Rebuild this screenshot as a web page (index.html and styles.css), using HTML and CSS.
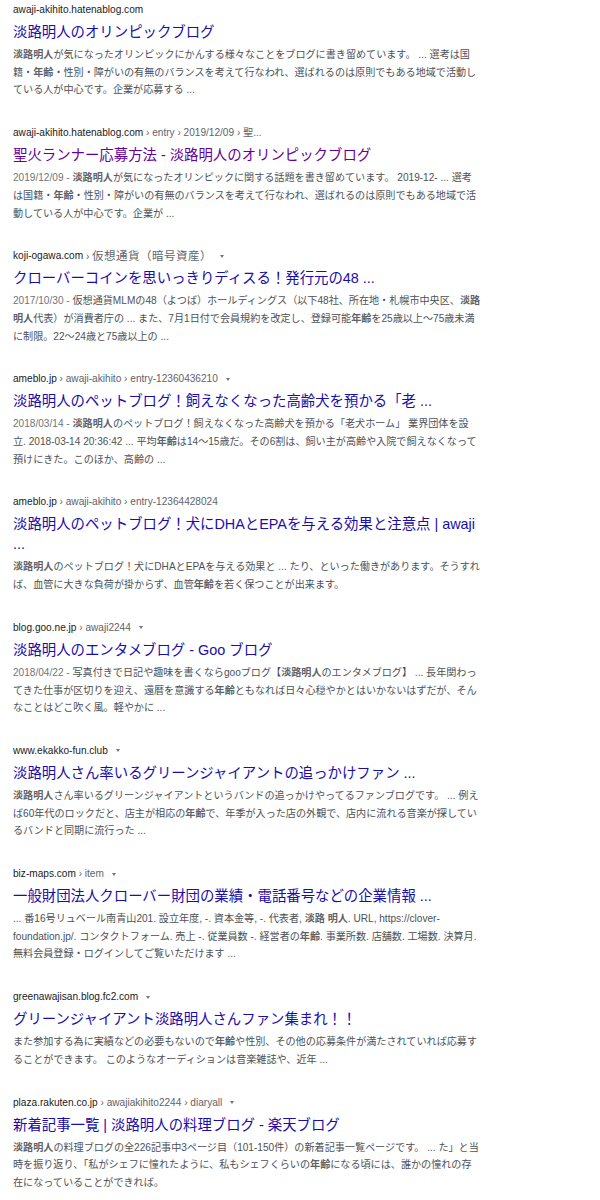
FILE: index.html
```html
<!DOCTYPE html>
<html lang="ja">
<head>
<meta charset="utf-8">
<title>淡路明人 - 検索結果</title>
<link rel="stylesheet" href="styles.css">
</head>
<body>
<div class="results">

<div class="result">
  <div class="url"><span class="dom">awaji-akihito.hatenablog.com</span></div>
  <h3 class="title"><a href="#">淡路明人のオリンピックブログ</a></h3>
  <div class="snippet"><b>淡路明人</b>が気になったオリンピックにかんする様々なことをブログに書き留めています。 ... 選考は国<br>籍・<b>年齢</b>・性別・障がいの有無のバランスを考えて行なわれ、選ばれるのは原則でもある地域で活動し<br>ている人が中心です。企業が応募する ...</div>
</div>

<div class="result">
  <div class="url"><span class="dom">awaji-akihito.hatenablog.com</span><span class="crumb"> › entry › 2019/12/09 › 聖...</span></div>
  <h3 class="title"><a href="#" class="visited">聖火ランナー応募方法 - 淡路明人のオリンピックブログ</a></h3>
  <div class="snippet"><span class="date">2019/12/09 - </span><b>淡路明人</b>が気になったオリンピックに関する話題を書き留めています。 2019-12- ... 選考<br>は国籍・<b>年齢</b>・性別・障がいの有無のバランスを考えて行なわれ、選ばれるのは原則でもある地域で活<br>動している人が中心です。企業が ...</div>
</div>

<div class="result">
  <div class="url"><span class="dom">koji-ogawa.com</span><span class="crumb"> › <span class="crumb-cjk">仮想通貨（暗号資産）</span></span><span class="arrow"></span></div>
  <h3 class="title"><a href="#">クローバーコインを思いっきりディスる！発行元の48 ...</a></h3>
  <div class="snippet"><span class="date">2017/10/30 - </span>仮想通貨MLMの48（よつば）ホールディングス（以下48社、所在地・札幌市中央区、<b>淡路<br>明人</b>代表）が消費者庁の ... また、7月1日付で会員規約を改定し、登録可能<b>年齢</b>を25歳以上～75歳未満<br>に制限。22～24歳と75歳以上の ...</div>
</div>

<div class="result">
  <div class="url"><span class="dom">ameblo.jp</span><span class="crumb"> › awaji-akihito › entry-12360436210</span><span class="arrow"></span></div>
  <h3 class="title"><a href="#">淡路明人のペットブログ！飼えなくなった高齢犬を預かる「老 ...</a></h3>
  <div class="snippet"><span class="date">2018/03/14 - </span><b>淡路明人</b>のペットブログ！飼えなくなった高齢犬を預かる「老犬ホーム」 業界団体を設<br>立. 2018-03-14 20:36:42 ... 平均<b>年齢</b>は14～15歳だ。その6割は、飼い主が高齢や入院で飼えなくなって<br>預けにきた。このほか、高齢の ...</div>
</div>

<div class="result">
  <div class="url"><span class="dom">ameblo.jp</span><span class="crumb"> › awaji-akihito › entry-12364428024</span></div>
  <h3 class="title"><a href="#">淡路明人のペットブログ！犬にDHAとEPAを与える効果と注意点 | awaji ...</a></h3>
  <div class="snippet"><b>淡路明人</b>のペットブログ！犬にDHAとEPAを与える効果と ... たり、といった働きがあります。そうすれ<br>ば、血管に大きな負荷が掛からず、血管<b>年齢</b>を若く保つことが出来ます。</div>
</div>

<div class="result">
  <div class="url"><span class="dom">blog.goo.ne.jp</span><span class="crumb"> › awaji2244</span><span class="arrow"></span></div>
  <h3 class="title"><a href="#">淡路明人のエンタメブログ - Goo ブログ</a></h3>
  <div class="snippet"><span class="date">2018/04/22 - </span>写真付きで日記や趣味を書くならgooブログ【<b>淡路明人</b>のエンタメブログ】 ... 長年関わっ<br>てきた仕事が区切りを迎え、還暦を意識する<b>年齢</b>ともなれば日々心穏やかとはいかないはずだが、そん<br>なことはどこ吹く風。軽やかに ...</div>
</div>

<div class="result">
  <div class="url"><span class="dom">www.ekakko-fun.club</span><span class="arrow"></span></div>
  <h3 class="title"><a href="#">淡路明人さん率いるグリーンジャイアントの追っかけファン ...</a></h3>
  <div class="snippet"><b>淡路明人</b>さん率いるグリーンジャイアントというバンドの追っかけやってるファンブログです。 ... 例え<br>ば60年代のロックだと、店主が相応の<b>年齢</b>で、年季が入った店の外観で、店内に流れる音楽が探してい<br>るバンドと同期に流行った ...</div>
</div>

<div class="result">
  <div class="url"><span class="dom">biz-maps.com</span><span class="crumb"> › item</span><span class="arrow"></span></div>
  <h3 class="title"><a href="#">一般財団法人クローバー財団の業績・電話番号などの企業情報 ...</a></h3>
  <div class="snippet">... 番16号リュベール南青山201. 設立年度, -. 資本金等, -. 代表者, <b>淡路 明人</b>. URL, https://clover-<br>foundation.jp/. コンタクトフォーム. 売上 -. 従業員数 -. 経営者の<b>年齢</b>. 事業所数. 店舗数. 工場数. 決算月.<br>無料会員登録・ログインしてご覧いただけます ...</div>
</div>

<div class="result">
  <div class="url"><span class="dom">greenawajisan.blog.fc2.com</span><span class="arrow"></span></div>
  <h3 class="title"><a href="#">グリーンジャイアント淡路明人さんファン集まれ！！</a></h3>
  <div class="snippet">また参加する為に実績などの必要もないので<b>年齢</b>や性別、その他の応募条件が満たされていれば応募す<br>ることができます。 このようなオーディションは音楽雑誌や、近年 ...</div>
</div>

<div class="result">
  <div class="url"><span class="dom">plaza.rakuten.co.jp</span><span class="crumb"> › awajiakihito2244 › diaryall</span><span class="arrow"></span></div>
  <h3 class="title"><a href="#">新着記事一覧 | 淡路明人の料理ブログ - 楽天ブログ</a></h3>
  <div class="snippet"><b>淡路明人</b>の料理ブログの全226記事中3ページ目（101-150件）の新着記事一覧ページです。 ... た」と当<br>時を振り返り、「私がシェフに憧れたように、私もシェフくらいの<b>年齢</b>になる頃には、誰かの憧れの存<br>在になっていることができれば。</div>
</div>

</div>
</body>
</html>
```

FILE: styles.css
```css
html, body {
  margin: 0;
  padding: 0;
  background: #ffffff;
}

body {
  font-family: "Liberation Sans", Arial, "Noto Sans CJK JP", sans-serif;
}

.results {
  display: flex;
  flex-direction: column;
  gap: 26px;
  padding: 2px 0 0 13px;
}

.result {
  width: 490px;
}

.url {
  font-size: 10.1px;
  line-height: 16px;
  height: 16px;
  white-space: nowrap;
  display: flex;
  align-items: center;
}

.dom {
  color: #202124;
}

.crumb {
  color: #5f6368;
  white-space: pre;
}

.crumb-cjk {
  font-size: 11.5px;
  letter-spacing: 0.5px;
}

.arrow {
  display: inline-block;
  width: 0;
  height: 0;
  margin-left: 8px;
  border-left: 2.5px solid transparent;
  border-right: 2.5px solid transparent;
  border-top: 3.5px solid #70757a;
}

.title {
  margin: 4px 0 0 0;
  max-width: 466px;
  font-size: 14.4px;
  line-height: 20px;
  font-weight: normal;
}

.title a {
  color: #1a0dab;
  text-decoration: none;
}

.title a.visited {
  color: #660099;
}

.snippet {
  margin-top: 4px;
  max-width: 482px;
  font-size: 10.1px;
  line-height: 17.7px;
  color: #4d5156;
}

.snippet b {
  font-weight: bold;
  color: #5f6368;
}

.date {
  color: #70757a;
}
```
